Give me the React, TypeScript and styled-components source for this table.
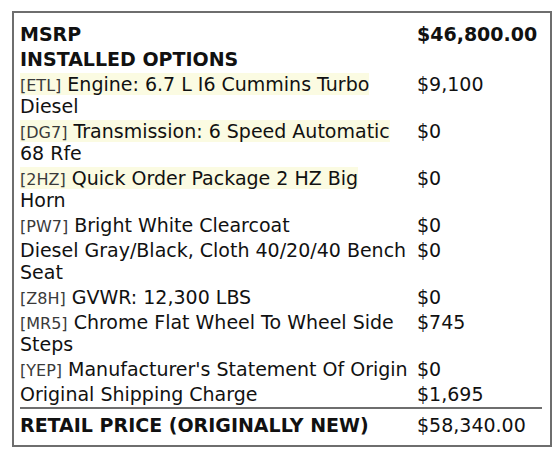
import styled, { createGlobalStyle } from "styled-components";

interface IOption {
  code?: string;
  label: string;
  price: string;
  highlight?: boolean;
}

const options: IOption[] = [
  { code: "ETL", label: "Engine: 6.7 L I6 Cummins Turbo Diesel", price: "$9,100", highlight: true },
  { code: "DG7", label: "Transmission: 6 Speed Automatic 68 Rfe", price: "$0", highlight: true },
  { code: "2HZ", label: "Quick Order Package 2 HZ Big Horn", price: "$0", highlight: true },
  { code: "PW7", label: "Bright White Clearcoat", price: "$0" },
  { label: "Diesel Gray/Black, Cloth 40/20/40 Bench Seat", price: "$0" },
  { code: "Z8H", label: "GVWR: 12,300 LBS", price: "$0" },
  { code: "MR5", label: "Chrome Flat Wheel To Wheel Side Steps", price: "$745" },
  { code: "YEP", label: "Manufacturer's Statement Of Origin", price: "$0" },
  { label: "Original Shipping Charge", price: "$1,695" },
];

const App = () => {
  return (
    <>
      <GlobalStyle />
      <Sticker>
        <Row>
          <Label $bold>MSRP</Label>
          <Price $bold>$46,800.00</Price>
        </Row>
        <Row>
          <Label $bold>INSTALLED OPTIONS</Label>
          <Price />
        </Row>
        {options.map((option) => (
          <Row key={option.label}>
            <Label $highlight={option.highlight}>
              {option.code && <Code>[{option.code}]</Code>}
              {option.code && " "}
              {option.label}
            </Label>
            <Price>{option.price}</Price>
          </Row>
        ))}
        <TotalRow>
          <Label $bold>RETAIL PRICE (ORIGINALLY NEW)</Label>
          <Price>$58,340.00</Price>
        </TotalRow>
      </Sticker>
    </>
  );
};

const GlobalStyle = createGlobalStyle`
  body {
    margin: 0;
    background: #ffffff;
    font-family: "DejaVu Sans", Verdana, sans-serif;
    color: #111111;
  }
`;

const Sticker = styled.div`
  margin: 11px 0 0 12px;
  width: 540px;
  height: 436px;
  border: 2px solid #6e6e6e;
  padding: 8px 8px 0 6px;
  box-sizing: border-box;
`;

const Row = styled.div`
  display: grid;
  grid-template-columns: 397px 1fr;
  padding: 1.5px 0;
  font-size: 19px;
  line-height: 22px;
`;

const TotalRow = styled(Row)`
  border-top: 2px solid #6e6e6e;
  margin-top: 1px;
  padding: 5px 0 6px;
`;

const Label = styled.div<{ $bold?: boolean; $highlight?: boolean }>`
  padding-right: 9px;
  font-weight: ${({ $bold }) => ($bold ? "bold" : "normal")};

  &::first-line {
    background: ${({ $highlight }) => ($highlight ? "#fbfbe2" : "transparent")};
  }
`;

const Price = styled.div<{ $bold?: boolean }>`
  font-weight: ${({ $bold }) => ($bold ? "bold" : "normal")};
  white-space: nowrap;
`;

const Code = styled.span`
  font-size: 16px;
  line-height: 1;
  color: #3a3a3a;
`;

export default App;
